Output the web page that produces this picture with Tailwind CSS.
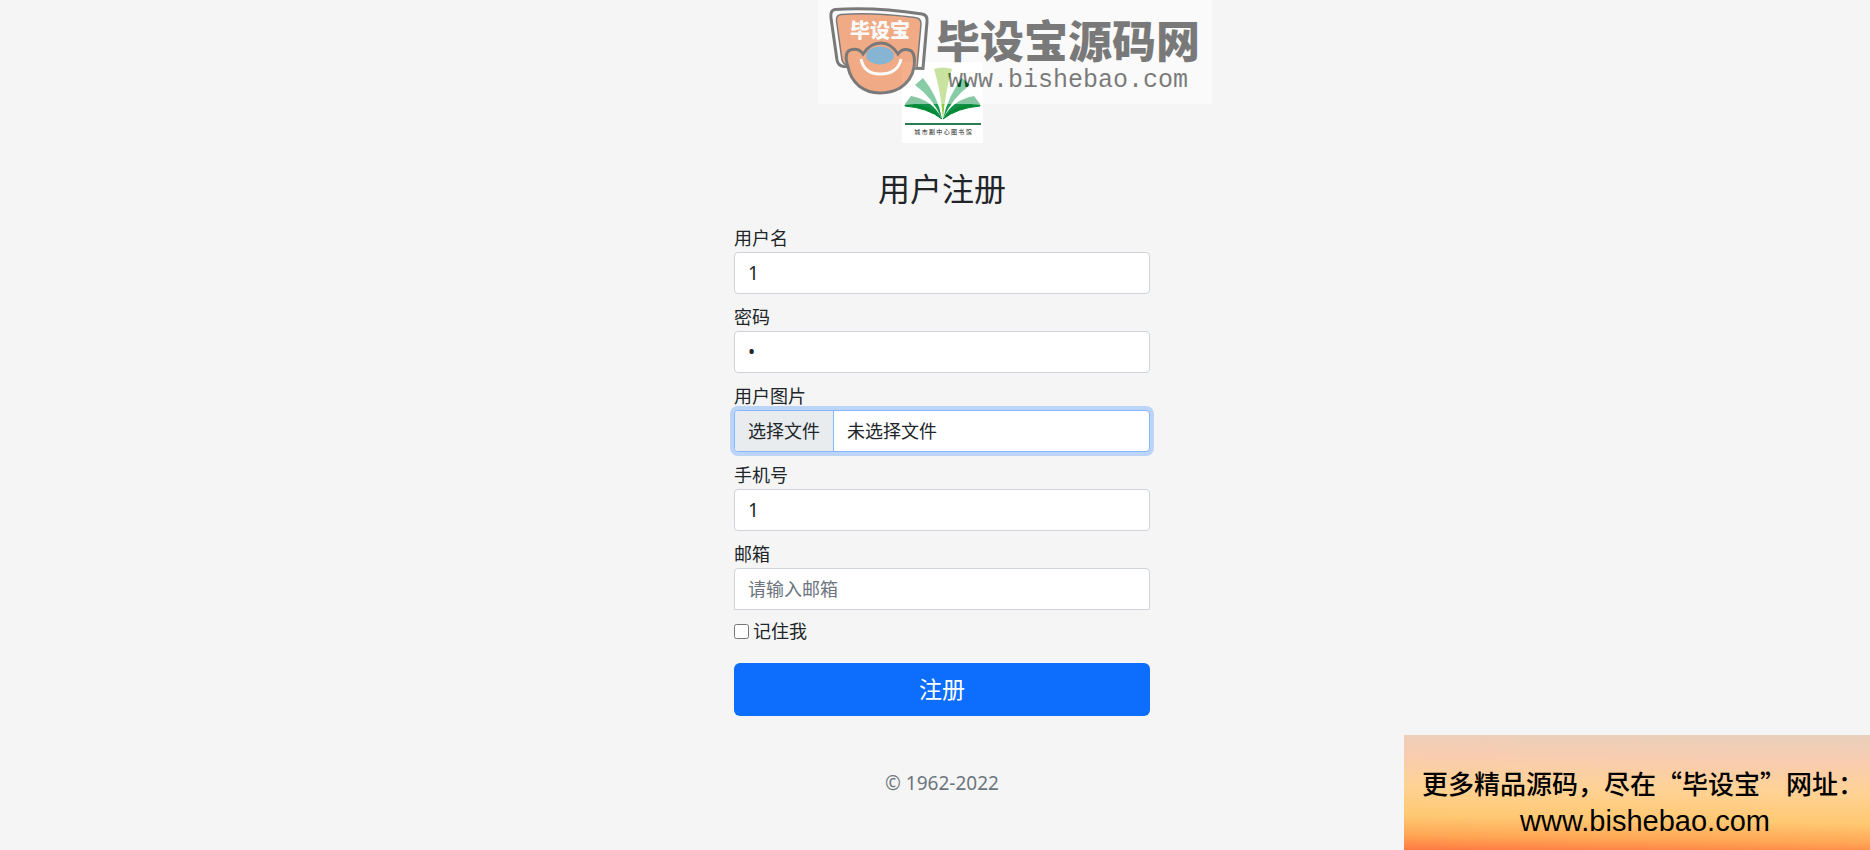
<!DOCTYPE html>
<html lang="zh-CN">

<head>
  <meta charset="UTF-8">
  <meta name="viewport" content="width=device-width, initial-scale=1.0">
  <title>用户注册</title>
  <script src="https://cdn.jsdelivr.net/npm/@tailwindcss/browser@4"></script>
</head>

<body class="relative min-h-screen overflow-x-hidden bg-[#f5f5f5] pl-[14px] text-lg text-[#212529] font-['Noto_Sans','Noto_Sans_CJK_SC',sans-serif]">

  <main class="mx-auto w-full max-w-[416px] pt-[62px]">
    <form>
      <!-- 图书馆标志 -->
      <svg class="mx-auto block h-[81px] w-[81px]" viewBox="0 0 81 81" role="img" aria-label="城市副中心图书馆">
        <rect width="81" height="81" fill="#fff" />
        <path d="M32 7Q41 4 50 7Q43 30 41 57Q39 30 32 7Z" fill="#92c83e" />
        <path d="M13 23L21 16Q36 34 40 57Q31 36 13 23Z" fill="#0f9a4c" />
        <path d="M68 23L60 16Q46 34 41 57Q50 36 68 23Z" fill="#0f9a4c" />
        <path d="M3 42L9 34Q31 38 40 57Q27 43 3 42Z" fill="#128f48" />
        <path d="M78 42L72 34Q50 38 41 57Q54 43 78 42Z" fill="#128f48" />
        <path d="M3 43Q27 41 40 57Q26 46 3 44Z" fill="#008a35" stroke="#008a35" />
        <path d="M78 43Q54 41 41 57Q55 46 78 44Z" fill="#008a35" stroke="#008a35" />
        <path d="M3 62H79" stroke="#2b7a50" stroke-width="2" />
        <text x="41" y="72" text-anchor="middle" font-size="6" fill="#222" font-family="Noto Sans CJK SC">城 市 副 中 心 图 书 馆</text>
      </svg>

      <h1 class="mt-6 mb-[14px] text-center text-[32px] leading-11 font-normal">用户注册</h1>

      <div class="mb-[10px]">
        <label for="username" class="block leading-[27px]">用户名</label>
        <input type="text" id="username" name="username" value="1" placeholder="请输入用户名"
          class="block h-[42px] w-full rounded border border-[#ced4da] bg-white px-[13px] text-[19px] placeholder-[#6c757d] outline-none">
      </div>
      <div class="mb-[10px]">
        <label for="password" class="block leading-[27px]">密码</label>
        <input type="password" id="password" name="password" value="1" placeholder="请输入密码"
          class="block h-[42px] w-full rounded border border-[#ced4da] bg-white px-[13px] text-[19px] placeholder-[#6c757d] outline-none">
      </div>
      <div class="mb-[10px]">
        <span class="block leading-[27px]">用户图片</span>
        <label for="photo"
          class="flex h-[42px] w-full overflow-hidden rounded border border-[#86b7fe] bg-white leading-10 ring-4 ring-[#bbd4f8]">
          <span class="border-r border-[#86b7fe] bg-[#e9ecef] px-[13px]">选择文件</span>
          <span class="px-[13px]">未选择文件</span>
          <input type="file" id="photo" name="photo" aria-label="用户图片" class="sr-only">
        </label>
      </div>
      <div class="mb-[10px]">
        <label for="phone" class="block leading-[27px]">手机号</label>
        <input type="text" id="phone" name="phone" value="1" placeholder="请输入手机号"
          class="block h-[42px] w-full rounded border border-[#ced4da] bg-white px-[13px] text-[19px] placeholder-[#6c757d] outline-none">
      </div>
      <div class="mb-2">
        <label for="email" class="block leading-[27px]">邮箱</label>
        <input type="email" id="email" name="email" placeholder="请输入邮箱"
          class="block h-[42px] w-full rounded-t border border-[#ced4da] bg-white px-[13px] text-lg placeholder-[#6c757d] outline-none">
      </div>

      <label class="mb-[19px] flex items-center gap-1 leading-[26px]">
        <input type="checkbox" name="remember" class="h-[15px] w-[15px]">
        记住我
      </label>

      <button type="submit"
        class="block h-[53px] w-full rounded-md bg-[#0d6efd] text-[23px] text-white hover:bg-[#0b5ed7]">注册</button>
      <p class="mt-[54px] mb-4 text-center text-[19px] leading-[27px] text-[#6c757d]">© 1962-2022</p>
    </form>
  </main>

  <!-- 顶部水印 -->
  <div class="pointer-events-none absolute top-0 left-[818px] h-[104px] w-[394px] bg-white opacity-50">
    <svg class="block h-full w-full" viewBox="0 0 394 104">
      <path d="M17 9.500Q58 7 104 14Q110 15 109 22L105 68.500L26 66.500Q20 66 19 60L13 18Q12 10 17 9.500Z" fill="#fff" stroke="#000" stroke-width="3" />
      <path d="M23 14.500Q55 12 97 17.500Q103 18 103 24L99 68L30 66Q25 64 24 60L18.500 21Q18 15 23 14.500Z" fill="#ec6218" stroke="#000" stroke-width="1.500" />
      <path d="M30 67Q25 51 34 49.500Q41 48 45 54Q52 43 63 43Q73 43 80 54Q84 48 91 50Q98 52 96 67Q94 80 82 88Q73 93 62 93Q50 93 41 86Q32 78 30 67Z" fill="#ec6218" stroke="#000" stroke-width="3" />
      <ellipse cx="62" cy="55.500" rx="14" ry="9" fill="#1a76b4" />
      <path d="M43 59Q46 74 62 74Q80 74 83 59" fill="none" stroke="#fff" stroke-width="3" />
      <text x="32" y="38" font-size="20" font-weight="900" fill="#fff" font-family="Noto Sans CJK SC">毕设宝</text>
      <text x="118" y="58" font-size="44" font-weight="900" font-family="Noto Sans CJK SC">毕设宝源码网</text>
      <text x="130" y="87" font-size="25" font-family="Liberation Mono">www.bishebao.com</text>
    </svg>
  </div>

  <!-- 右下角横幅 -->
  <aside class="absolute right-0 bottom-0 flex h-[115px] w-[466px] flex-col items-center overflow-hidden bg-[linear-gradient(181deg,#e8d0bc_0%,#f8ccb0_22%,#ffd294_48%,#ffc872_72%,#ffa654_88%,#ff7a42_100%)] pt-[30px] text-[26px] leading-9 whitespace-nowrap text-black">
    <p class="pl-3 font-medium font-['Noto_Sans_CJK_SC',sans-serif]">更多精品源码，尽在“毕设宝”网址：</p>
    <a href="#" class="pl-4 text-[29px] leading-10 font-['Liberation_Sans',sans-serif]">www.bishebao.com</a>
  </aside>

</body>

</html>
